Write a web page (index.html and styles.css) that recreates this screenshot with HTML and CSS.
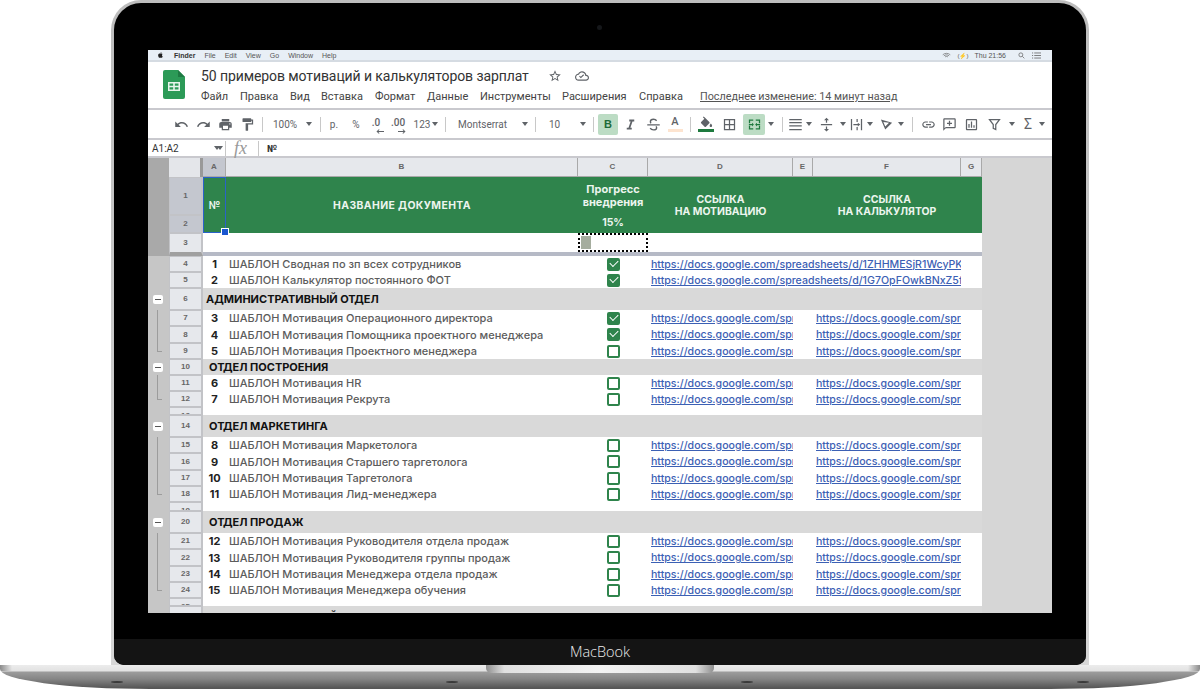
FILE: index.html
```html
<!DOCTYPE html>
<html lang="en">
<head>
  <meta charset="UTF-8" />
  <title>50 примеров мотиваций</title>
  <link rel="stylesheet" href="styles.css">
</head>
<body>
<div class="laptop">
  <div class="lid">
    <div class="bezel">
      <span class="camera"></span>
      <div class="screen">

        <!-- Mac menu bar -->
        <div class="macbar">
          <svg class="apple" viewBox="0 0 24 24"><path d="M17 12.600c0-2.400 2-3.500 2.100-3.600-1.100-1.700-2.900-1.900-3.500-1.900-1.500-.2-2.900.9-3.700.9-.8 0-1.900-.9-3.200-.8-1.600 0-3.200 1-4 2.400-1.700 3-.4 7.400 1.200 9.800.8 1.200 1.800 2.500 3.100 2.400 1.200 0 1.700-.8 3.200-.8s1.900.8 3.200.8c1.300 0 2.200-1.200 3-2.400.9-1.400 1.300-2.700 1.300-2.800 0 0-2.500-1-2.600-4zM14.600 5.400c.7-.8 1.100-2 1-3.100-1 0-2.200.7-2.900 1.500-.6.7-1.200 1.900-1 3 1.100.1 2.200-.6 2.900-1.400z"/></svg>
          <b class="finder">Finder</b>
          <span>File</span><span>Edit</span><span>View</span><span>Go</span><span>Window</span><span>Help</span>
          <div class="macbar-right">
            <svg class="mac-ic" viewBox="0 0 24 16"><path d="M2 6c6-5 14-5 20 0M5 9c4-3.500 10-3.500 14 0M8 12c2.500-2 5.500-2 8 0" fill="none" stroke="#666" stroke-width="1.800"/></svg>
            <span class="battery">(⚡)</span>
            <span>Thu 21:56</span>
            <svg class="mac-ic search" viewBox="0 0 16 16"><circle cx="6.500" cy="6.500" r="4.500" fill="none" stroke="#555" stroke-width="1.500"/><path d="M10 10l4.500 4.500" stroke="#555" stroke-width="1.500"/></svg>
            <svg class="mac-ic list" viewBox="0 0 16 12"><path d="M0 1.500h2M4 1.500h12M0 6h2M4 6h12M0 10.500h2M4 10.500h12" stroke="#555" stroke-width="1.300"/></svg>
          </div>
        </div>

        <!-- Docs title -->
        <div class="titlebar">
          <svg class="logo" viewBox="0 0 22 29"><path d="M2 0h13l7 7v20a2 2 0 0 1-2 2H2a2 2 0 0 1-2-2V2a2 2 0 0 1 2-2z" fill="#2c9a57"/><path d="M15 0l7 7h-7z" fill="#1f7a43"/><path d="M5 12h12v9H5zM6.500 13.500v2.200h3.700v-2.200zm5.300 0v2.200h3.700v-2.200zm-5.300 3.800v2.200h3.700v-2.200zm5.300 0v2.200h3.700v-2.200z" fill="#e8f5ec" fill-rule="evenodd"/></svg>
          <div class="title-text">
            <div class="title-line">
              <h1>50 примеров мотиваций и калькуляторов зарплат</h1>
              <svg class="title-ic star" viewBox="0 0 24 24"><path d="M22 9.240l-7.190-.62L12 2 9.190 8.630 2 9.240l5.460 4.730L5.820 21 12 17.270 18.180 21l-1.630-7.030L22 9.240zM12 15.400l-3.760 2.270 1-4.280-3.320-2.880 4.380-.38L12 6.100l1.710 4.040 4.380.38-3.320 2.880 1 4.280L12 15.400z"/></svg>
              <svg class="title-ic cloud" viewBox="0 0 24 24"><path d="M19.350 10.040C18.670 6.590 15.640 4 12 4 9.110 4 6.600 5.640 5.350 8.040 2.340 8.360 0 10.910 0 14c0 3.310 2.690 6 6 6h13c2.760 0 5-2.240 5-5 0-2.640-2.050-4.780-4.650-4.960zM19 18H6c-2.210 0-4-1.790-4-4 0-2.050 1.530-3.760 3.560-3.970l1.070-.11.500-.95C8.080 7.140 9.940 6 12 6c2.620 0 4.880 1.860 5.390 4.430l.3 1.500 1.530.11c1.560.1 2.780 1.410 2.780 2.960 0 1.650-1.350 3-3 3z"/><path d="M10 16l-3-3 1.300-1.300 1.700 1.700 4.200-4.200 1.300 1.300z"/></svg>
            </div>
            <nav class="menu">
              <span class="m1">Файл</span><span class="m2">Правка</span><span class="m3">Вид</span><span class="m4">Вставка</span><span class="m5">Формат</span><span class="m6">Данные</span><span class="m7">Инструменты</span><span class="m8">Расширения</span><span class="m9">Справка</span>
              <a class="last-edit">Последнее изменение: 14 минут назад</a>
            </nav>
          </div>
        </div>

        <!-- Toolbar -->
        <div class="toolbar">
          <span class="t w22"><svg class="ic" viewBox="0 0 24 24"><path d="M12.500 8c-2.650 0-5.050.99-6.900 2.600L2 7v9h9l-3.620-3.620c1.390-1.160 3.160-1.880 5.120-1.880 3.540 0 6.550 2.310 7.600 5.500l2.370-.78C21.080 11.030 17.150 8 12.500 8z"/></svg></span>
          <span class="t w22"><svg class="ic" viewBox="0 0 24 24"><path d="M18.400 10.600C16.550 8.990 14.150 8 11.500 8c-4.650 0-8.580 3.030-9.960 7.220L3.900 16c1.050-3.190 4.050-5.500 7.600-5.500 1.950 0 3.730.72 5.120 1.880L13 16h9V7l-3.600 3.600z"/></svg></span>
          <span class="t w22"><svg class="ic" viewBox="0 0 24 24"><path d="M19 8H5c-1.660 0-3 1.340-3 3v6h4v4h12v-4h4v-6c0-1.660-1.340-3-3-3zm-3 11H8v-5h8v5zm3-7c-.55 0-1-.45-1-1s.45-1 1-1 1 .45 1 1-.45 1-1 1zm-1-9H6v4h12V3z"/></svg></span>
          <span class="t w22"><svg class="ic" viewBox="0 0 24 24"><path d="M18 4V3c0-.55-.45-1-1-1H5c-.55 0-1 .45-1 1v4c0 .55.45 1 1 1h12c.55 0 1-.45 1-1V6h1v4H9v11c0 .55.45 1 1 1h2c.55 0 1-.45 1-1v-9h8V4h-3z"/></svg></span>
          <span class="t w8 sep"></span>
          <span class="t w38">100%</span>
          <span class="t w10 caret"></span>
          <span class="t w12 sep"></span>
          <span class="t w16">р.</span>
          <span class="t w28">%</span>
          <span class="t w12 dec">.0<svg class="dec-arrow" viewBox="0 0 10 6"><path d="M10 3H2M4 .5L1.500 3 4 5.500" fill="none" stroke="#5f6368" stroke-width="1.300"/></svg></span>
          <span class="t w32 dec">.00<svg class="dec-arrow" viewBox="0 0 10 6"><path d="M0 3h8M6 .5L8.500 3 6 5.500" fill="none" stroke="#5f6368" stroke-width="1.300"/></svg></span>
          <span class="t w16">123</span>
          <span class="t w10 caret"></span>
          <span class="t w10 sep"></span>
          <span class="t w70 font-name">Montserrat</span>
          <span class="t w10 caret"></span>
          <span class="t w10 sep"></span>
          <span class="t w38 size">10</span>
          <span class="t w10 caret"></span>
          <span class="t w10 sep"></span>
          <span class="t w20 on bold">B</span>
          <span class="t w24"><svg class="ic" viewBox="0 0 24 24"><path d="M10 4v3h2.210l-3.420 10H6v3h8v-3h-2.210l3.420-10H18V4z"/></svg></span>
          <span class="t w22"><svg class="ic" viewBox="0 0 24 24"><path d="M17 6c-1-1.500-2.800-2.500-5-2.500-3 0-5 1.600-5 4 0 1.200.5 2 1.200 2.500M2 12.500h20M16 15c.6.6 1 1.300 1 2 0 2.300-2.200 3.500-5 3.500-2.400 0-4.300-1-5.300-2.700" fill="none" stroke="#5f6368" stroke-width="2.200"/></svg></span>
          <span class="t w22 text-a">A</span>
          <span class="t w8 sep"></span>
          <span class="t w24 fill-ic"><svg class="ic" viewBox="0 0 24 18"><path d="M16.560 8.940L7.620 0 6.210 1.410l2.380 2.380-5.150 5.150c-.59.59-.59 1.540 0 2.120l5.500 5.500c.29.29.68.44 1.060.44s.77-.15 1.060-.44l5.500-5.500c.59-.58.59-1.530 0-2.120zM19 11.500s-2 2.170-2 3.500c0 1.100.9 2 2 2s2-.9 2-2c0-1.330-2-3.500-2-3.500z"/></svg></span>
          <span class="t w22"><svg class="ic" viewBox="0 0 24 24"><path d="M3 3v18h18V3H3zm8 16H5v-6h6v6zm0-8H5V5h6v6zm8 8h-6v-6h6v6zm0-8h-6V5h6v6z"/></svg></span>
          <span class="t w3"></span>
          <span class="t w22 on"><svg class="ic" viewBox="0 0 24 24"><path d="M3 4h7v2H5v4H3zM14 4h7v6h-2V6h-5zM3 14h2v4h5v2H3zM19 14h2v6h-7v-2h5zM3 11h5V9l3 3-3 3v-2H3zM21 11h-5V9l-3 3 3 3v-2h5z" fill="#1e7a3e"/></svg></span>
          <span class="t w12 caret"></span>
          <span class="t w10 sep"></span>
          <span class="t w17"><svg class="ic" viewBox="0 0 24 24"><path d="M2 3h20v2H2zM2 8h20v2H2zM2 13h20v2H2zM2 19h20v2H2z"/></svg></span>
          <span class="t w10 caret"></span>
          <span class="t w24"><svg class="ic" viewBox="0 0 24 24"><path d="M3 11h18v2H3zM12 1l4 4h-3v4h-2V5H8zM12 23l4-4h-3v-4h-2v4H8z"/></svg></span>
          <span class="t w10 caret"></span>
          <span class="t w16"><svg class="ic" viewBox="0 0 24 24"><path d="M3 3h2v18H3zM19 3h2v18h-2zM12 3h2v5h-2zM12 16h2v5h-2zM7 11h7V9l4 3-4 3v-2H7z"/></svg></span>
          <span class="t w12 caret"></span>
          <span class="t w20"><svg class="ic" viewBox="0 0 24 24"><path d="M3 4l18 5-11 11zM7 8l3 7 6-6z" fill-rule="evenodd"/></svg></span>
          <span class="t w10 caret"></span>
          <span class="t w12 sep"></span>
          <span class="t w20"><svg class="ic" viewBox="0 0 24 24"><path d="M3.900 12c0-1.710 1.390-3.100 3.100-3.100h4V7H7c-2.760 0-5 2.240-5 5s2.240 5 5 5h4v-1.900H7c-1.710 0-3.100-1.390-3.100-3.100zM8 13h8v-2H8v2zm9-6h-4v1.900h4c1.710 0 3.100 1.390 3.100 3.100s-1.390 3.100-3.100 3.100h-4V17h4c2.760 0 5-2.240 5-5s-2.240-5-5-5z"/></svg></span>
          <span class="t w22"><svg class="ic" viewBox="0 0 24 24"><path d="M20 2H4c-1.100 0-2 .9-2 2v18l4-4h14c1.100 0 2-.9 2-2V4c0-1.100-.9-2-2-2zm0 14H6l-2 2V4h16v12zM11 6h2v3h3v2h-3v3h-2v-3H8V9h3z"/></svg></span>
          <span class="t w22"><svg class="ic" viewBox="0 0 24 24"><path d="M19 3H5c-1.100 0-2 .9-2 2v14c0 1.100.9 2 2 2h14c1.100 0 2-.9 2-2V5c0-1.100-.9-2-2-2zm0 16H5V5h14v14zM7 11h2v6H7zm4-4h2v10h-2zm4 6h2v4h-2z"/></svg></span>
          <span class="t w24"><svg class="ic" viewBox="0 0 24 24"><path d="M4 4h16l-6 8v8l-4-2v-6z" fill="none" stroke="#5f6368" stroke-width="2"/></svg></span>
          <span class="t w12 caret"></span>
          <span class="t w20 sigma">Σ</span>
          <span class="t w8 caret"></span>
        </div>

        <!-- Formula bar -->
        <div class="formula">
          <span class="range">A1:A2</span>
          <span class="caret range-caret"></span>
          <span class="fx">fx</span>
          <span class="value">№</span>
        </div>

        <!-- Sheet -->
        <div class="sheet">
          <div class="row colhead">
            <i class="corner"></i>
            <i class="corner2"></i>
            <span class="ch sel a">A</span><span class="ch b">B</span><span class="ch c">C</span><span class="ch d">D</span><span class="ch e">E</span><span class="ch f">F</span><span class="ch g">G</span>
          </div>

          <div class="row frozen">
            <i class="dark-gut"></i>
            <span class="num sel r1">1</span>
            <span class="num sel r2">2</span>
            <span class="head a selected">№</span>
            <span class="head b doc-head">НАЗВАНИЕ ДОКУМЕНТА</span>
            <span class="head c r1 progress">Прогресс<br>внедрения</span>
            <span class="head c r2 percent">15%</span>
            <span class="head d">ССЫЛКА<br>НА МОТИВАЦИЮ</span>
            <span class="head e"></span>
            <span class="head f">ССЫЛКА<br>НА КАЛЬКУЛЯТОР</span>
            <span class="head g"></span>
          </div>

          <div class="row h23 divider">
            <i class="dark-gut"></i><span class="num">3</span>
            <span class="copy-cell"><i></i></span>
          </div>

          <div class="row h16"><span class="num">4</span><b class="n">1</b><span class="doc">ШАБЛОН Сводная по зп всех сотрудников</span><span class="check done"></span><a class="link wide">https://docs.google.com/spreadsheets/d/1ZHHMESjR1WcyPKe</a></div>
          <div class="row h16"><span class="num">5</span><b class="n">2</b><span class="doc">ШАБЛОН Калькулятор постоянного ФОТ</span><span class="check done"></span><a class="link wide">https://docs.google.com/spreadsheets/d/1G7OpFOwkBNxZ5f</a></div>

          <div class="row h22 section"><i class="minus"></i><span class="num">6</span><b class="dept indent0">АДМИНИСТРАТИВНЫЙ ОТДЕЛ</b></div>
          <div class="row h16"><i class="gut"></i><span class="num">7</span><b class="n">3</b><span class="doc">ШАБЛОН Мотивация Операционного директора</span><span class="check done"></span><a class="link d">https://docs.google.com/spre</a><a class="link f">https://docs.google.com/spre</a></div>
          <div class="row h17"><i class="gut"></i><span class="num">8</span><b class="n">4</b><span class="doc">ШАБЛОН Мотивация Помощника проектного менеджера</span><span class="check done"></span><a class="link d">https://docs.google.com/spre</a><a class="link f">https://docs.google.com/spre</a></div>
          <div class="row h16"><i class="gut end"></i><span class="num">9</span><b class="n">5</b><span class="doc">ШАБЛОН Мотивация Проектного менеджера</span><span class="check"></span><a class="link d">https://docs.google.com/spre</a><a class="link f">https://docs.google.com/spre</a></div>

          <div class="row h16 section"><i class="minus"></i><span class="num">10</span><b class="dept">ОТДЕЛ ПОСТРОЕНИЯ</b></div>
          <div class="row h16"><i class="gut"></i><span class="num">11</span><b class="n">6</b><span class="doc">ШАБЛОН Мотивация HR</span><span class="check"></span><a class="link d">https://docs.google.com/spre</a><a class="link f">https://docs.google.com/spre</a></div>
          <div class="row h16"><i class="gut end"></i><span class="num">12</span><b class="n">7</b><span class="doc">ШАБЛОН Мотивация Рекрута</span><span class="check"></span><a class="link d">https://docs.google.com/spre</a><a class="link f">https://docs.google.com/spre</a></div>
          <div class="row h8"><span class="num tiny">13</span></div>

          <div class="row h22 section"><i class="minus"></i><span class="num">14</span><b class="dept">ОТДЕЛ МАРКЕТИНГА</b></div>
          <div class="row h16"><i class="gut"></i><span class="num">15</span><b class="n">8</b><span class="doc">ШАБЛОН Мотивация Маркетолога</span><span class="check"></span><a class="link d">https://docs.google.com/spre</a><a class="link f">https://docs.google.com/spre</a></div>
          <div class="row h17"><i class="gut"></i><span class="num">16</span><b class="n">9</b><span class="doc">ШАБЛОН Мотивация Старшего таргетолога</span><span class="check"></span><a class="link d">https://docs.google.com/spre</a><a class="link f">https://docs.google.com/spre</a></div>
          <div class="row h16"><i class="gut"></i><span class="num">17</span><b class="n">10</b><span class="doc">ШАБЛОН Мотивация Таргетолога</span><span class="check"></span><a class="link d">https://docs.google.com/spre</a><a class="link f">https://docs.google.com/spre</a></div>
          <div class="row h16"><i class="gut end"></i><span class="num">18</span><b class="n">11</b><span class="doc">ШАБЛОН Мотивация Лид-менеджера</span><span class="check"></span><a class="link d">https://docs.google.com/spre</a><a class="link f">https://docs.google.com/spre</a></div>
          <div class="row h9"><span class="num tiny">19</span></div>

          <div class="row h22 section"><i class="minus"></i><span class="num">20</span><b class="dept">ОТДЕЛ ПРОДАЖ</b></div>
          <div class="row h16"><i class="gut"></i><span class="num">21</span><b class="n">12</b><span class="doc">ШАБЛОН Мотивация Руководителя отдела продаж</span><span class="check"></span><a class="link d">https://docs.google.com/spre</a><a class="link f">https://docs.google.com/spre</a></div>
          <div class="row h17"><i class="gut"></i><span class="num">22</span><b class="n">13</b><span class="doc">ШАБЛОН Мотивация Руководителя группы продаж</span><span class="check"></span><a class="link d">https://docs.google.com/spre</a><a class="link f">https://docs.google.com/spre</a></div>
          <div class="row h16"><i class="gut"></i><span class="num">23</span><b class="n">14</b><span class="doc">ШАБЛОН Мотивация Менеджера отдела продаж</span><span class="check"></span><a class="link d">https://docs.google.com/spre</a><a class="link f">https://docs.google.com/spre</a></div>
          <div class="row h16"><i class="gut end"></i><span class="num">24</span><b class="n">15</b><span class="doc">ШАБЛОН Мотивация Менеджера обучения</span><span class="check"></span><a class="link d">https://docs.google.com/spre</a><a class="link f">https://docs.google.com/spre</a></div>
          <div class="row h8"><span class="num tiny">25</span></div>
          <div class="row h22 section"><i class="minus"></i><span class="num">26</span><b class="dept">ПРОИЗВОДСТВЕННЫЙ ОТДЕЛ</b></div>
        </div>
      </div>
      <div class="chin">MacBook</div>
    </div>
  </div>
  <div class="base">
    <span class="notch"></span>
    <i class="foot f1"></i><i class="foot f2"></i><i class="foot f3"></i><i class="foot f4"></i>
  </div>
</div>
</body>
</html>
```

FILE: styles.css
```css
* {
  box-sizing: border-box;
}

html, body {
  margin: 0;
  height: 689px;
  overflow: hidden;
  background: #fff;
}

i {
  font-style: normal;
}

/* laptop frame */
.lid {
  width: 978px;
  height: 665px;
  margin: 0 auto;
  padding: 3px 3px 0;
  border-radius: 30px 30px 0 0;
  background: linear-gradient(#bdbdbd, #d6d6d6);
}

.bezel {
  position: relative;
  height: 662px;
  padding: 47px 34px 0;
  border-radius: 27px 27px 10px 10px;
  background: #000;
  overflow: hidden;
}

.camera {
  position: absolute;
  left: 483px;
  top: 22px;
  width: 5px;
  height: 5px;
  border-radius: 50%;
  background: #15171a;
}

.screen {
  height: 563px;
  background: #fff;
  overflow: hidden;
}

.chin {
  height: 26px;
  margin: 26px -34px 0;
  background: #141414;
  color: #ececec;
  font: 300 14.500px/26px "Open Sans", sans-serif;
  text-align: center;
}

.base {
  position: relative;
  height: 24px;
  border-radius: 0 0 150px 150px / 0 0 20px 20px;
  background:
    linear-gradient(90deg, #8a8a8a, rgba(255, 255, 255, 0) 12px, rgba(255, 255, 255, 0) 1188px, #8a8a8a) 0 0 / 100% 6px no-repeat,
    linear-gradient(#ececec 0, #e2e2e2 6px, #9c9c9c 7px, #858585 14px, #565656 23px);
}

.notch {
  position: absolute;
  left: 486px;
  top: 0;
  width: 228px;
  height: 8px;
  border-radius: 0 0 5px 5px;
  background: linear-gradient(90deg, #8f8f8f, #e0e0e0 8%, #f2f2f2 50%, #e0e0e0 92%, #8f8f8f);
}

.foot {
  position: absolute;
  top: 16px;
  width: 12px;
  height: 2px;
  border-radius: 50%;
  background: #3a3a3a;
}

.f1 { left: 111px; }
.f2 { left: 446px; }
.f3 { left: 741px; }
.f4 { left: 1077px; }

/* mac menu bar */
.macbar {
  display: flex;
  align-items: center;
  gap: 9px;
  height: 12px;
  padding-left: 9px;
  border-bottom: 2px solid #d5dbe2;
  background: #e8eff6;
  color: #555;
  font: 7px "Liberation Sans", sans-serif;
}

.apple {
  width: 7px;
  height: 8px;
  margin-right: 1px;
  fill: #222;
}

.finder {
  color: #333;
  font-size: 7px;
}

.macbar-right {
  display: flex;
  align-items: center;
  gap: 6px;
  margin-left: auto;
  padding-right: 11px;
}

.mac-ic {
  width: 9px;
  height: 7px;
}

.battery {
  font-size: 6px;
}

.search {
  margin-left: 5px;
}

/* document title */
.titlebar {
  display: flex;
  height: 48px;
  border-bottom: 2px solid #c9c9ce;
}

.logo {
  width: 22px;
  height: 29px;
  margin: 8px 16px 0 15px;
}

.title-line {
  display: flex;
  align-items: center;
  height: 27px;
}

h1 {
  width: 327px;
  margin: 0;
  color: #333;
  font: 400 14px "Roboto", sans-serif;
  letter-spacing: -.09px;
  white-space: nowrap;
}

.title-ic {
  width: 14px;
  height: 14px;
  fill: #5f6368;
}

.star {
  margin-left: 20px;
}

.cloud {
  margin-left: 13px;
}

.menu {
  display: flex;
  align-items: center;
  height: 15px;
  color: #444;
  font: 400 11px "Roboto", sans-serif;
  white-space: nowrap;
}

.menu span {
  display: block;
}

.m1 { width: 39px; }
.m2 { width: 50px; }
.m3 { width: 31px; }
.m4 { width: 54px; }
.m5 { width: 52px; }
.m6 { width: 53px; }
.m7 { width: 82px; }
.m8 { width: 77px; }
.m9 { width: 61px; }

.last-edit {
  color: #555;
  font-size: 10.800px;
  text-decoration: underline;
}

/* toolbar */
.toolbar {
  display: flex;
  align-items: center;
  height: 30px;
  padding-left: 22px;
  border-bottom: 2px solid #c9c9ce;
  color: #5f6368;
  font: 400 10px "Roboto", sans-serif;
}

.t {
  display: flex;
  flex: none;
  align-items: center;
  justify-content: center;
  height: 21px;
}

.w3 { width: 3px; }
.w8 { width: 8px; }
.w10 { width: 10px; }
.w12 { width: 12px; }
.w16 { width: 16px; }
.w17 { width: 17px; }
.w20 { width: 20px; }
.w22 { width: 22px; }
.w24 { width: 24px; }
.w28 { width: 28px; }
.w32 { width: 32px; }
.w38 { width: 38px; }
.w70 { width: 70px; }

.ic {
  width: 15px;
  height: 15px;
  fill: #5f6368;
}

.sep::after {
  content: "";
  width: 1px;
  height: 15px;
  background: #c8c8c8;
}

.caret::after,
.range-caret {
  content: "";
  width: 0;
  height: 0;
  border: 3px solid transparent;
  border-top: 4px solid #5f6368;
  border-bottom: 0;
}

.on {
  border-radius: 2px;
  background: #bcdcc4;
}

.bold {
  color: #1e6b38;
  font: 700 11px "Liberation Sans", sans-serif;
}

.dec {
  position: relative;
  padding-bottom: 3px;
  font-weight: 500;
}

.dec-arrow {
  position: absolute;
  bottom: 1px;
  left: 50%;
  width: 8px;
  height: 5px;
}

.font-name {
  justify-content: flex-start;
  padding-left: 8px;
}

.size {
  justify-content: flex-start;
  padding-left: 9px;
}

.text-a {
  flex-direction: column;
  font: 500 11px/12px "Roboto", sans-serif;
}

.text-a::after {
  content: "";
  width: 15px;
  height: 3px;
  margin-top: 1px;
  background: #fde4d0;
}

.fill-ic {
  flex-direction: column;
}

.fill-ic .ic {
  height: 12px;
}

.fill-ic::after {
  content: "";
  width: 16px;
  height: 3px;
  margin-top: 1px;
  background: #1e7a3e;
}

.sigma {
  font-size: 14px;
}

/* formula bar */
.formula {
  display: flex;
  align-items: center;
  height: 18px;
  border-bottom: 2px solid #c9c9ce;
  color: #333;
  font: 400 10px "Roboto", sans-serif;
}

.range {
  width: 66px;
  padding-left: 4px;
}

.range-caret {
  flex: none;
  margin-right: 5px;
}

.fx {
  width: 34px;
  height: 15px;
  padding-left: 8px;
  border-left: 1px solid #c8c8c8;
  border-right: 1px solid #c8c8c8;
  color: #999;
  font: italic 18px/14px "Liberation Serif", serif;
}

.value {
  padding-left: 8px;
  font-weight: 700;
}

/* sheet */
.sheet {
  height: 456px;
  background: #d6d6d6;
  font: 500 11px "Inter", sans-serif;
}

.row {
  display: grid;
  grid-template-columns: 21px 34px 23px 352px 70px 145px 20px 148px 21px 70px;
  grid-template-rows: 100%;
  height: 16px;
  background: linear-gradient(90deg, #c6c6c6 21px, transparent 21px);
}

.row::before {
  content: "";
  grid-column: 3 / 10;
  grid-row: 1;
  background: #fff;
}

.row > * {
  grid-row: 1;
}

.h8 { height: 8px; }
.h9 { height: 9px; }
.h16 { height: 16px; }
.h17 { height: 17px; }
.h22 { height: 22px; }
.h23 { height: 23px; }

.colhead {
  height: 19px;
  background: none;
}

.colhead::before {
  display: none;
}

.corner {
  grid-column: 1;
  background: #a9a9a9;
}

.corner2 {
  grid-column: 2;
  border-right: 3px solid #999;
  background: #e4e6ea;
}

.ch {
  border-right: 1px solid #a9a9a9;
  border-bottom: 1px solid #a9a9a9;
  background: #e6e8ec;
  color: #666;
  font: 700 8px/18px "Liberation Sans", sans-serif;
  text-align: center;
}

.ch.sel {
  background: #c4c7cf;
}

.a { grid-column: 3; }
.b { grid-column: 4; }
.c { grid-column: 5; }
.d { grid-column: 6; }
.e { grid-column: 7; }
.f { grid-column: 8; }
.g { grid-column: 9; }

.num {
  grid-column: 2;
  margin: 0;
  border: 1px solid #c2c3c7;
  border-right-width: 2px;
  background: #e6e8ec;
  color: #666;
  font: 700 8px/14px "Liberation Sans", sans-serif;
  text-align: center;
}

.h17 .num { line-height: 15px; }
.h22 .num { line-height: 20px; }
.h23 .num { line-height: 17px; }

.num.tiny {
  overflow: hidden;
  line-height: 16px;
}

.num.sel {
  background: #c4c7cf;
}

.frozen {
  grid-template-rows: 38px 18px;
  height: 56px;
  background: none;
}

.frozen::before {
  grid-row: 1 / 3;
}

.dark-gut {
  grid-column: 1;
  background: #a9a9a9;
}

.frozen .dark-gut {
  grid-row: 1 / 3;
}

.frozen .num.r1 {
  grid-row: 1;
  line-height: 36px;
}

.frozen .num.r2 {
  grid-row: 2;
  line-height: 16px;
}

.head {
  display: flex;
  grid-row: 1 / 3;
  align-items: center;
  justify-content: center;
  padding-top: 2px;
  background: #2f844c;
  color: #ecf5ee;
  font: 700 10.400px/12.500px "Inter", sans-serif;
  text-align: center;
}

.doc-head {
  letter-spacing: .4px;
}

.frozen .head.r2 {
  grid-row: 2;
  padding-top: 0;
  padding-bottom: 2px;
}

.frozen .head.r1 {
  grid-row: 1;
  padding-top: 0;
}

.progress {
  font-size: 11px;
  line-height: 13px;
}

.selected {
  position: relative;
  z-index: 1;
  border: 1px solid #2a62c9;
}

.selected::after {
  content: "";
  position: absolute;
  right: -4px;
  bottom: -4px;
  width: 6px;
  height: 6px;
  border: 1px solid #fff;
  background: #1a56d0;
}

.divider::before {
  border-bottom: 4px solid #b6bac6;
}

.divider .num {
  border-bottom: 4px solid #a0a0a0;
}

.copy-cell {
  grid-column: 5;
  margin-bottom: 4px;
  padding: 1px;
  border: 2px dotted #000;
}

.copy-cell i {
  display: block;
  width: 10px;
  height: 100%;
  background: #a5ad9e;
}

.n {
  grid-column: 3;
  align-self: center;
  justify-self: center;
  color: #222;
  font-size: 11px;
  font-weight: 700;
}

.doc {
  grid-column: 4;
  align-self: center;
  padding-left: 3px;
  color: #5c5c5c;
  white-space: nowrap;
}

.check {
  grid-column: 5;
  align-self: center;
  justify-self: center;
  width: 13px;
  height: 13px;
  border: 2px solid #2f844c;
  border-radius: 2px;
}

.check.done {
  position: relative;
  background: #2f844c;
}

.check.done::after {
  content: "";
  position: absolute;
  left: 1px;
  top: 0;
  width: 7px;
  height: 4px;
  border-left: 1.500px solid #fff;
  border-bottom: 1.500px solid #fff;
  transform: rotate(-45deg);
}

.link {
  align-self: center;
  padding-left: 3px;
  overflow: hidden;
  color: #3c60b4;
  font-size: 10.600px;
  text-decoration: underline;
  white-space: nowrap;
}

.link.wide {
  grid-column: 6 / 9;
}

.section::before {
  background: #d9d9d9;
}

.dept {
  grid-column: 3 / 6;
  align-self: center;
  padding-left: 6px;
  color: #111;
  font-size: 11px;
  font-weight: 700;
  white-space: nowrap;
}

.dept.indent0 {
  padding-left: 3px;
}

.minus {
  position: relative;
  grid-column: 1;
  align-self: center;
  justify-self: start;
  width: 10px;
  height: 9px;
  margin-left: 5px;
  border-radius: 2px;
  background: #fff;
}

.minus::after {
  content: "";
  position: absolute;
  left: 2px;
  top: 4px;
  width: 6px;
  height: 1px;
  background: #555;
}

.gut {
  grid-column: 1;
  width: 5px;
  margin-left: 9px;
  border-left: 1px solid #9c9c9c;
}

.gut.end {
  height: 9px;
  border-bottom: 1px solid #9c9c9c;
}
```
